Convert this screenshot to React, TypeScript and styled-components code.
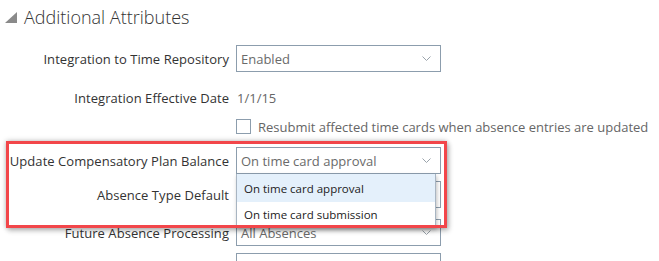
import React from 'react';
import styled, { createGlobalStyle } from 'styled-components';

const GlobalStyle = createGlobalStyle`
  html, body {
    margin: 0;
    padding: 0;
    background: #ffffff;
  }
  body {
    font-family: 'Open Sans', 'Noto Sans', Arial, sans-serif;
    color: #333333;
  }
`;

const Page = styled.div`
  position: relative;
  width: 659px;
  height: 261px;
  overflow: hidden;
  background: #ffffff;
`;

const SectionHeader = styled.div`
  display: flex;
  align-items: center;
  gap: 7px;
  height: 34px;
  padding-left: 5px;
`;

const SectionTitle = styled.h2`
  margin: 0;
  font-size: 18px;
  font-weight: 300;
  color: #333333;
`;

const Form = styled.div`
  display: flex;
  flex-direction: column;
  padding-top: 11px;
`;

const Row = styled.div<{ $gap?: number; $height?: number }>`
  display: grid;
  grid-template-columns: 229px 1fr;
  column-gap: 7px;
  align-items: center;
  min-height: ${p => p.$height ?? 27}px;
  margin-top: ${p => p.$gap ?? 0}px;
`;

const Label = styled.label`
  text-align: right;
  font-size: 13px;
  letter-spacing: 0.05px;
  color: #333333;
  white-space: nowrap;
`;

const Value = styled.span`
  font-size: 13px;
  color: #666666;
  padding-left: 1px;
`;

const SelectWrap = styled.div`
  position: relative;
  width: 205px;
`;

const SelectBox = styled.div`
  box-sizing: border-box;
  display: flex;
  align-items: center;
  justify-content: space-between;
  height: 27px;
  padding: 0 9px 0 4px;
  border: 1px solid #8c9dad;
  background: #ffffff;
  font-size: 13px;
  color: #6a6a6a;
  white-space: nowrap;
`;

const CheckRow = styled.div`
  display: flex;
  align-items: center;
  gap: 7px;
  font-size: 13px;
  color: #666666;
  white-space: nowrap;
`;

const CheckBox = styled.span`
  box-sizing: border-box;
  width: 15px;
  height: 15px;
  border: 1px solid #8c9dad;
  background: #ffffff;
  flex: none;
`;

const Menu = styled.ul`
  position: absolute;
  top: 27px;
  left: 0;
  width: 200px;
  margin: 0;
  padding: 0;
  list-style: none;
  box-sizing: border-box;
  background: #ffffff;
  border: 1px solid #a8b5c2;
  border-top: none;
  box-shadow: 1px 2px 4px rgba(0, 0, 0, 0.25);
  z-index: 2;
`;

const MenuItem = styled.li<{ $active?: boolean }>`
  display: flex;
  align-items: center;
  height: ${p => (p.$active ? 28 : 25)}px;
  padding-left: 7px;
  font-size: 11.5px;
  color: #222222;
  background: ${p => (p.$active ? '#e4f0fb' : '#ffffff')};
  white-space: nowrap;
`;

const Highlight = styled.div`
  position: absolute;
  left: 6px;
  top: 141px;
  width: 441px;
  height: 87px;
  box-sizing: border-box;
  border: 3px solid #f2464a;
  box-shadow: 0 0 5px rgba(0, 0, 0, 0.28), 2px 3px 5px rgba(0, 0, 0, 0.2);
  pointer-events: none;
  z-index: 3;
`;

const Chevron = () => (
  <svg width="9" height="5" viewBox="0 0 9 5" fill="none">
    <path d="M0.5 0.5 L4.5 4.5 L8.5 0.5" stroke="#9aa3ab" strokeWidth="1" />
  </svg>
);

const Triangle = () => (
  <svg width="12" height="11" viewBox="0 0 12 11">
    <path d="M12 0 L12 11 L0 11 Z" fill="#8a8a8a" />
  </svg>
);

const Select: React.FC<{ value: string; children?: React.ReactNode }> = ({ value, children }) => (
  <SelectWrap>
    <SelectBox>
      <span>{value}</span>
      <Chevron />
    </SelectBox>
    {children}
  </SelectWrap>
);

export default function App() {
  return (
    <>
      <GlobalStyle />
      <Page>
        <SectionHeader>
          <Triangle />
          <SectionTitle>Additional Attributes</SectionTitle>
        </SectionHeader>
        <Form>
          <Row>
            <Label>Integration to Time Repository</Label>
            <Select value="Enabled" />
          </Row>
          <Row $gap={12}>
            <Label>Integration Effective Date</Label>
            <Value>1/1/15</Value>
          </Row>
          <Row $gap={5} $height={21}>
            <span />
            <CheckRow>
              <CheckBox />
              Resubmit affected time cards when absence entries are updated
            </CheckRow>
          </Row>
          <Row $gap={10}>
            <Label>Update Compensatory Plan Balance</Label>
            <Select value="On time card approval">
              <Menu>
                <MenuItem $active>On time card approval</MenuItem>
                <MenuItem>On time card submission</MenuItem>
              </Menu>
            </Select>
          </Row>
          <Row $gap={7}>
            <Label>Absence Type Default</Label>
            <Select value="" />
          </Row>
          <Row $gap={11}>
            <Label>Future Absence Processing</Label>
            <Select value="All Absences" />
          </Row>
          <Row $gap={7}>
            <span />
            <Select value="" />
          </Row>
        </Form>
        <Highlight />
      </Page>
    </>
  );
}
